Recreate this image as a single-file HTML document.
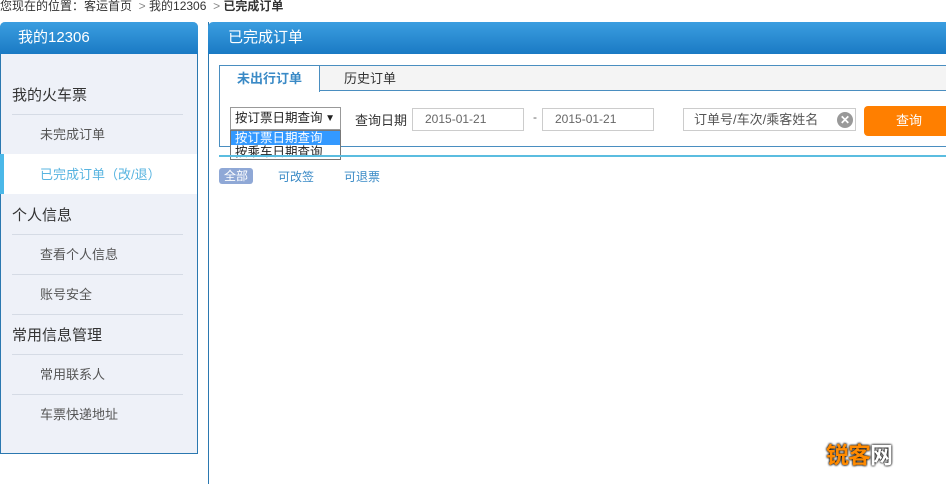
<!DOCTYPE html>
<html><head><meta charset="utf-8"><style>
*{margin:0;padding:0;box-sizing:border-box}
html,body{width:946px;height:484px;overflow:hidden}
body{background:#fff;font-family:"Liberation Sans","Noto Sans CJK SC","WenQuanYi Zen Hei",sans-serif;font-size:12px;color:#333;position:relative}
.a{position:absolute}
.hd{background:linear-gradient(#3b9ee0,#1a7ac4);color:#fff;font-size:15px;border-radius:5px 5px 0 0;height:32px;line-height:32px}
.sep{position:absolute;left:12px;width:171px;height:1px;background:#d5dbe5}
.it{position:absolute;left:40px;font-size:13px;color:#555}
.ti{position:absolute;left:12px;font-size:15px;color:#333}
.inp{position:absolute;border:1px solid #ccc;height:23px;line-height:21px;padding-left:12px;color:#666;font-size:12px;background:#fff}
</style></head><body>
<div class="a" style="left:0;top:-1px;font-size:12px;color:#333;line-height:14px">您现在的位置：客运首页 &nbsp;<span style="color:#888">&gt;</span> 我的12306 &nbsp;<span style="color:#888">&gt;</span> <b>已完成订单</b></div>

<div class="a" style="left:0;top:22px;width:198px;height:432px;border:1px solid #2b78b0;border-top:none;background:#eef1f8;border-radius:5px 5px 0 0"></div>
<div class="a hd" style="left:0;top:22px;width:198px;padding-left:18px">我的12306</div>
<div class="ti" style="top:84px">我的火车票</div>
<div class="sep" style="top:114px"></div>
<div class="it" style="top:124px">未完成订单</div>
<div class="a" style="left:1px;top:154px;width:196px;height:40px;background:#fff"></div>
<div class="a" style="left:0;top:154px;width:4px;height:40px;background:#4bb8e8"></div>
<div class="it" style="top:164px;color:#58b4e0">已完成订单（改/退）</div>
<div class="ti" style="top:204px">个人信息</div>
<div class="sep" style="top:234px"></div>
<div class="it" style="top:244px">查看个人信息</div>
<div class="sep" style="top:274px"></div>
<div class="it" style="top:284px">账号安全</div>
<div class="sep" style="top:314px"></div>
<div class="ti" style="top:324px">常用信息管理</div>
<div class="sep" style="top:354px"></div>
<div class="it" style="top:364px">常用联系人</div>
<div class="sep" style="top:394px"></div>
<div class="it" style="top:404px">车票快递地址</div>

<div class="a" style="left:208px;top:22px;width:760px;height:480px;border-left:1px solid #2b78b0"></div>
<div class="a hd" style="left:208px;top:22px;width:760px;padding-left:20px">已完成订单</div>

<div class="a" style="left:219px;top:65px;width:740px;height:82px;border:1px solid #4a8ec0"></div>
<div class="a" style="left:220px;top:66px;width:740px;height:25px;background:#f4f4f4;border-bottom:1px solid #4a8ec0"></div>
<div class="a" style="left:220px;top:66px;width:100px;height:26px;background:#fff;border-right:1px solid #4a8ec0;text-align:center;line-height:26px;font-weight:bold;color:#3a8ac6;font-size:13px">未出行订单</div>
<div class="a" style="left:344px;top:66px;line-height:26px;font-size:13px;color:#333">历史订单</div>

<div class="a" style="left:230px;top:107px;width:111px;height:23px;border:1px solid #999;background:#fff;line-height:21px;padding-left:4px;font-size:12.5px;color:#222;white-space:nowrap">按订票日期查询<span style="position:absolute;right:5px;font-size:10px">▼</span></div>
<div class="a" style="left:230px;top:130px;width:111px;height:30px;border:1px solid #777;background:#fff;font-size:12.5px;line-height:14px;white-space:nowrap;overflow:hidden">
<div style="background:#3399ff;color:#fff;padding-left:4px">按订票日期查询</div>
<div style="padding-left:4px;color:#222">按乘车日期查询</div></div>
<div class="a" style="left:355px;top:110px;font-size:13px;color:#333">查询日期</div>
<div class="inp" style="left:412px;top:108px;width:112px">2015-01-21</div>
<div class="a" style="left:533px;top:110px;color:#666">-</div>
<div class="inp" style="left:542px;top:108px;width:112px">2015-01-21</div>
<div class="inp" style="left:683px;top:108px;width:173px;padding-left:10px;font-size:13px;color:#555">订单号/车次/乘客姓名
<div class="a" style="right:2px;top:3px;width:16px;height:16px;border-radius:50%;background:#999;color:#fff;font-size:12px;line-height:16px;text-align:center;font-weight:bold">✕</div></div>
<div class="a" style="left:864px;top:106px;width:90px;height:30px;background:#ff7f00;border-radius:4px;color:#fff;text-align:center;line-height:30px;font-size:13px">查询</div>

<div class="a" style="left:219px;top:155px;width:740px;height:2px;background:#5bbde0"></div>
<div class="a" style="left:219px;top:168px;width:34px;height:16px;background:#8fa8d6;border-radius:3px;color:#fff;text-align:center;line-height:16px;font-size:12px">全部</div>
<div class="a" style="left:278px;top:168px;color:#3a8ac6;font-size:12px">可改签</div>
<div class="a" style="left:344px;top:168px;color:#3a8ac6;font-size:12px">可退票</div>

<div class="a" style="left:826px;top:436px;font-size:23px;font-weight:bold;letter-spacing:-1px;text-shadow:0 0 2px #000,0 0 2px #000"><span style="color:#ff8a00">锐客</span><span style="color:#fff">网</span></div>
</body></html>
